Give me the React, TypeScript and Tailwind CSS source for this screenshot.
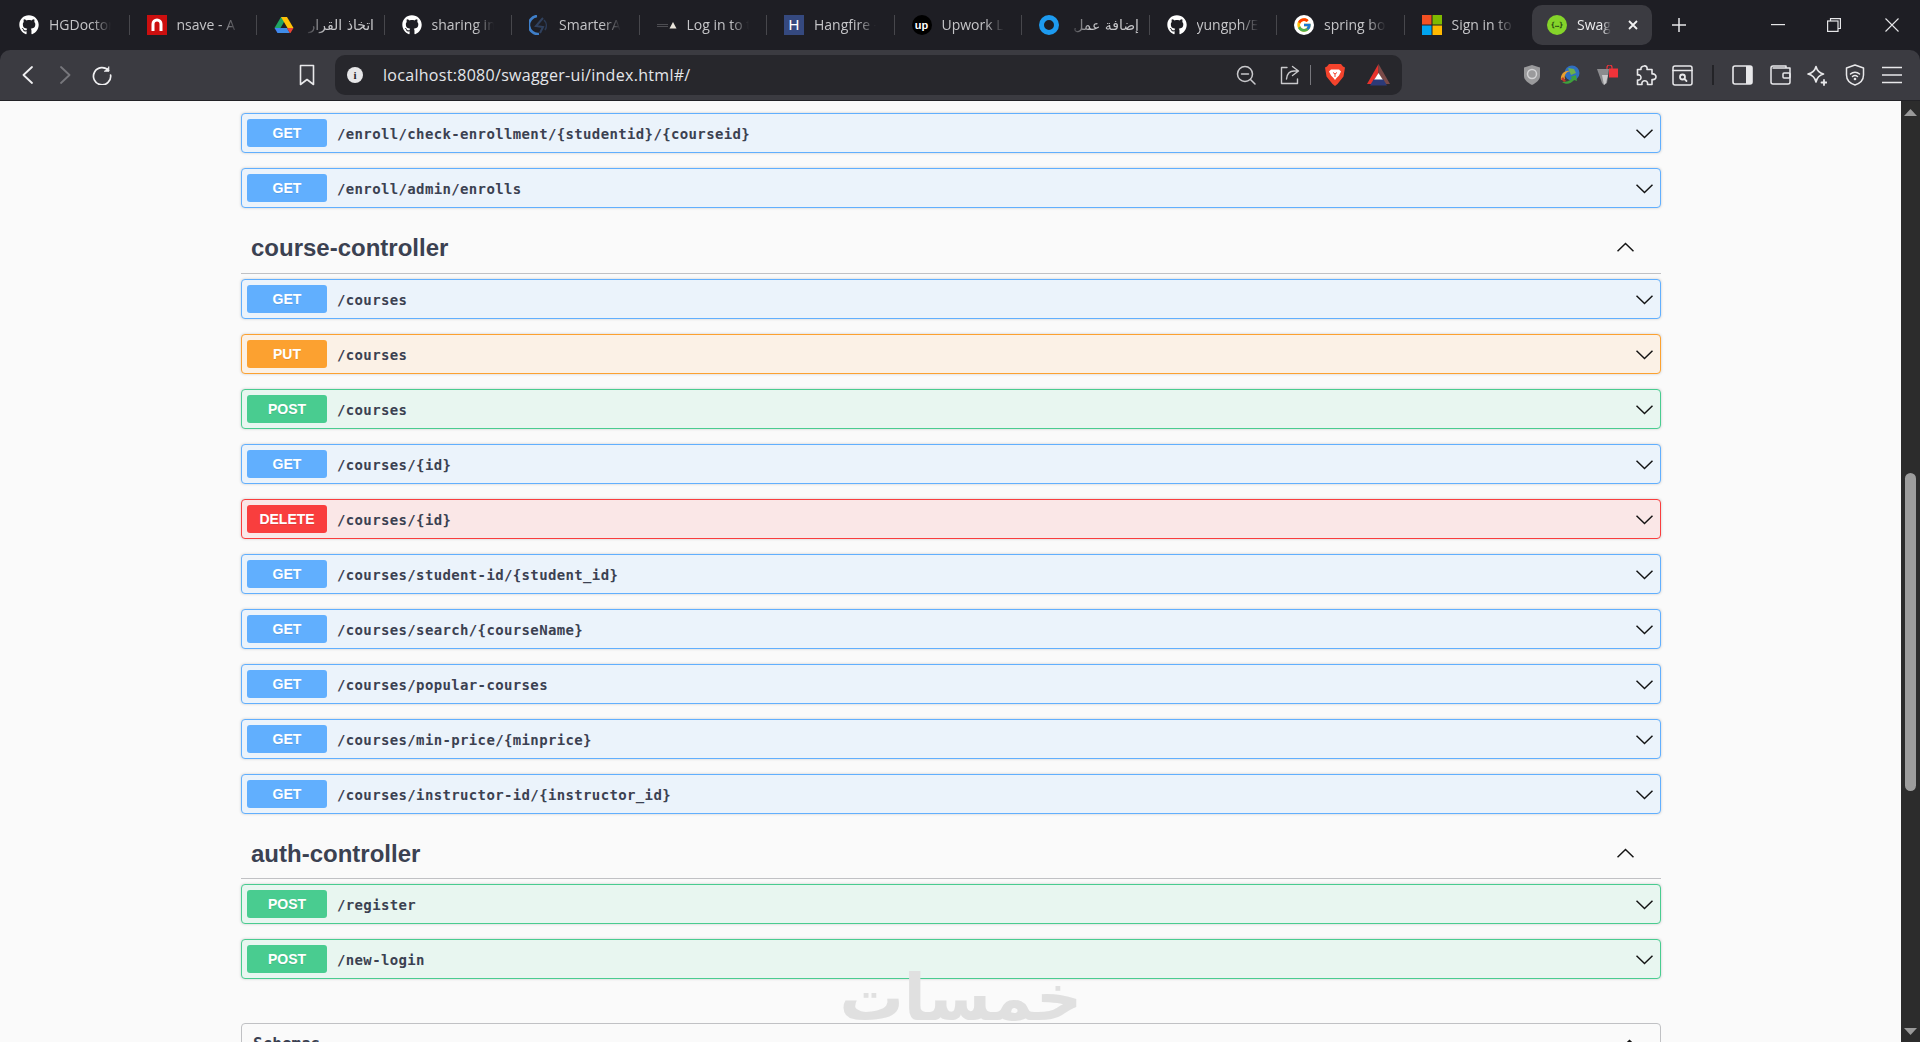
import React from 'react';
import { FaGithub } from 'react-icons/fa';
import { FcGoogle } from 'react-icons/fc';

type Method = 'GET' | 'PUT' | 'POST' | 'DELETE';

const methodStyles: Record<Method, { row: string; badge: string }> = {
  GET: { row: 'border-[#61affe] bg-[#ebf3fb]', badge: 'bg-[#61affe]' },
  PUT: { row: 'border-[#fca130] bg-[#fbf1e6]', badge: 'bg-[#fca130]' },
  POST: { row: 'border-[#49cc90] bg-[#e8f6f0]', badge: 'bg-[#49cc90]' },
  DELETE: { row: 'border-[#f93e3e] bg-[#fae7e7]', badge: 'bg-[#f93e3e]' },
};

const Chevron: React.FC<{ up?: boolean; className?: string }> = ({ up, className }) => (
  <svg viewBox="0 0 17 10" className={className} fill="none" stroke="#141414" strokeWidth="1.5">
    <path d={up ? 'M0.5 9.2 8.5 1.5 16.5 9.2' : 'M0.5 0.8 8.5 8.5 16.5 0.8'} />
  </svg>
);

const Operation: React.FC<{ method: Method; path: string }> = ({ method, path }) => (
  <div className={`flex h-[40px] items-center rounded-[4px] border mb-[15px] pl-[5px] pr-[7px] shadow-[0_0_3px_rgba(0,0,0,0.19)] ${methodStyles[method].row}`}>
    <span className={`flex h-[28px] w-[80px] items-center justify-center rounded-[3px] text-[14px] font-bold text-white font-['Liberation_Sans',Arial,sans-serif] [text-shadow:0_1px_0_rgba(0,0,0,0.1)] ${methodStyles[method].badge}`}>
      {method}
    </span>
    <span className="ml-[10px] pt-[2px] text-[14px] font-bold tracking-[0.36px] text-[#3b4151] font-['DejaVu_Sans_Mono',monospace]">
      {path}
    </span>
    <Chevron className="ml-auto mt-[1px] h-[10px] w-[17px]" />
  </div>
);

const SectionHeading: React.FC<{ title: string; className?: string }> = ({ title, className }) => (
  <div className={`flex h-[51px] items-center border-b border-[#c0c1c4] mb-[5px] pl-[10px] pr-[27px] ${className ?? ''}`}>
    <h3 className="text-[24px] font-bold text-[#3b4151] font-['Liberation_Sans',Arial,sans-serif]">{title}</h3>
    <Chevron up className="ml-auto mb-[2px] h-[10px] w-[17px]" />
  </div>
);

const NsaveIcon = () => (
  <svg viewBox="0 0 20 20" className="h-[20px] w-[20px] shrink-0">
    <rect width="20" height="20" fill="#cc0f0f" />
    <path d="M6 16V9a4 4 0 0 1 8 0v7" fill="none" stroke="#fff" strokeWidth="3" />
  </svg>
);

const DriveIcon = () => (
  <svg viewBox="0 0 20 20" className="h-[20px] w-[20px] shrink-0">
    <path d="M7 2h6l-6.5 11H0.5z" fill="#1fa463" />
    <path d="M7 2h6l6.5 11h-6z" fill="#ffc107" />
    <path d="M0.5 13h6.2l-0.2 5H3.5z" fill="#4285f4" />
    <path d="M6.5 13h6.5l2.8 5H3.5z" fill="#3f8ce8" />
    <path d="M13 13h6.5l-3 5h-0.7z" fill="#ea4335" />
  </svg>
);

const SmarterIcon = () => (
  <svg viewBox="0 0 20 20" className="h-[20px] w-[20px] shrink-0" fill="none">
    <path d="M8 1a9 9 0 0 0 2 18" stroke="#3f7fc9" strokeWidth="2.6" />
    <path d="M14 3 7 11l7 1-3 6" stroke="#30415e" strokeWidth="2" />
    <path d="M15 5a8 8 0 0 1 1 10" stroke="#2b3a55" strokeWidth="1.6" />
  </svg>
);

const LoginIcon = () => (
  <svg viewBox="0 0 20 20" className="h-[20px] w-[20px] shrink-0">
    <rect x="0" y="9" width="11" height="1" fill="#4d4d52" />
    <rect x="0" y="11" width="11" height="1" fill="#4d4d52" />
    <path d="M16 7 19.500 13.500H12.500z" fill="#e9e4da" />
  </svg>
);

const HangfireIcon = () => (
  <span className="flex h-[20px] w-[20px] shrink-0 items-center justify-center bg-[#35497f] text-[15px] text-white font-['Liberation_Sans',sans-serif]">
    H
  </span>
);

const UpworkIcon = () => (
  <span className="flex h-[20px] w-[20px] shrink-0 items-center justify-center rounded-full bg-black text-[11px] font-bold leading-none text-white font-['Liberation_Sans',sans-serif]">
    up
  </span>
);

const RingIcon = () => (
  <span className="h-[20px] w-[20px] shrink-0 rounded-full border-[5px] border-[#1d9bf0]" />
);

const MicrosoftIcon = () => (
  <svg viewBox="0 0 20 20" className="h-[20px] w-[20px] shrink-0">
    <rect width="9.5" height="9.5" fill="#f25022" />
    <rect x="10.5" width="9.5" height="9.5" fill="#7fba00" />
    <rect y="10.5" width="9.5" height="9.5" fill="#00a4ef" />
    <rect x="10.5" y="10.5" width="9.5" height="9.5" fill="#ffb900" />
  </svg>
);

const SwaggerIcon = () => (
  <span className="flex h-[20px] w-[20px] shrink-0 items-center justify-center rounded-full bg-[#85d42a] text-[7px] font-bold leading-none text-[#1c3a10] font-['DejaVu_Sans_Mono',monospace]">
    {'{…}'}
  </span>
);

const GithubIcon = () => <FaGithub className="h-[20px] w-[20px] shrink-0 text-white" />;
const GoogleIcon = () => (
  <span className="flex h-[20px] w-[20px] shrink-0 items-center justify-center rounded-full bg-white">
    <FcGoogle className="h-[16px] w-[16px]" />
  </span>
);

const Tab: React.FC<{ icon: React.ReactNode; label: string; rtl?: boolean; last?: boolean }> = ({ icon, label, rtl, last }) => (
  <div className={`flex h-[20px] w-[127.5px] shrink-0 items-center pl-[17px] ${last ? '' : 'border-r border-[#47474c]'}`}>
    {icon}
    {rtl ? (
      <span dir="rtl" className="ml-[10px] w-[70px] overflow-hidden whitespace-nowrap text-[14px] text-[#c5c5c8] font-['DejaVu_Sans',sans-serif] [mask-image:linear-gradient(to_left,black_70%,transparent)]">
        {label}
      </span>
    ) : (
      <span className="-mt-[2px] ml-[10px] w-[62px] overflow-hidden whitespace-nowrap text-[14px] text-[#c5c5c8] font-['Open_Sans',sans-serif] [mask-image:linear-gradient(to_right,black_70%,transparent)]">
        {label}
      </span>
    )}
  </div>
);

const TabStrip = () => (
  <div className="flex h-[50px] items-center bg-[#1e1e24] pl-[2px]">
    <Tab icon={<GithubIcon />} label="HGDoctor" />
    <Tab icon={<NsaveIcon />} label="nsave - A" />
    <Tab icon={<DriveIcon />} label="اتخاذ القرار" rtl />
    <Tab icon={<GithubIcon />} label="sharing images" />
    <Tab icon={<SmarterIcon />} label="SmarterASP" />
    <Tab icon={<LoginIcon />} label="Log in to the" />
    <Tab icon={<HangfireIcon />} label="Hangfire - Dash" />
    <Tab icon={<UpworkIcon />} label="Upwork Login" />
    <Tab icon={<RingIcon />} label="إضافة عمل" rtl />
    <Tab icon={<GithubIcon />} label="yungph/Ed" />
    <Tab icon={<GoogleIcon />} label="spring boot" />
    <Tab icon={<MicrosoftIcon />} label="Sign in to" last />
    {/* active tab */}
    <div className="flex h-[40px] w-[120px] shrink-0 items-center rounded-[10px] bg-[#3b3b41] pl-[15px]">
      <SwaggerIcon />
      <span className="-mt-[2px] ml-[10px] w-[34px] overflow-hidden whitespace-nowrap text-[14px] text-[#ececee] font-['Open_Sans',sans-serif] [mask-image:linear-gradient(to_right,black_75%,transparent)]">
        Swagger
      </span>
      <svg viewBox="0 0 10 10" className="ml-[17px] h-[10px] w-[10px]" stroke="#f2f2f2" strokeWidth="1.8">
        <path d="M1 1l8 8M9 1l-8 8" />
      </svg>
    </div>
    <svg viewBox="0 0 14 14" className="ml-[20px] h-[14px] w-[14px]" stroke="#e6e6e8" strokeWidth="1.5">
      <path d="M7 0v14M0 7h14" />
    </svg>
    {/* window controls */}
    <svg viewBox="0 0 14 2" className="ml-[85px] h-[2px] w-[14px]" fill="#e6e6e8">
      <rect width="14" height="1.2" />
    </svg>
    <svg viewBox="0 0 14 14" className="ml-[42px] h-[14px] w-[14px]" fill="none" stroke="#e6e6e8" strokeWidth="1.2">
      <rect x="0.6" y="3" width="10.4" height="10.4" />
      <path d="M3.5 3V0.6h9.9v9.9H11" />
    </svg>
    <svg viewBox="0 0 14 14" className="ml-[44px] h-[14px] w-[14px]" stroke="#e6e6e8" strokeWidth="1.1">
      <path d="M0.5 0.5l13 13M13.5 0.5l-13 13" />
    </svg>
  </div>
);

const ToolStroke: React.FC<{ box?: string; className: string; children: React.ReactNode; stroke?: string; width?: number }> = ({ box = '0 0 20 20', className, children, stroke = '#dcdcde', width = 1.6 }) => (
  <svg viewBox={box} className={`shrink-0 ${className}`} fill="none" stroke={stroke} strokeWidth={width} strokeLinecap="round" strokeLinejoin="round">
    {children}
  </svg>
);

const Toolbar = () => (
  <div className="h-[51px] border-b border-[#222226] bg-[#1e1e24]">
    <div className="flex h-[50px] items-center rounded-t-[10px] bg-[#3b3b41]">
      <ToolStroke box="0 0 11 18" className="ml-[22px] h-[18px] w-[11px]" stroke="#f0f0f2" width={1.8}>
        <path d="M10 1 1.5 9l8.5 8" />
      </ToolStroke>
      <ToolStroke box="0 0 11 18" className="ml-[27px] h-[18px] w-[11px]" stroke="#77777c" width={1.8}>
        <path d="M1 1l8.5 8L1 17" />
      </ToolStroke>
      <ToolStroke className="ml-[21px] h-[20px] w-[20px]" stroke="#f0f0f2" width={1.7}>
        <path d="M16.5 5.5A8.6 8.6 0 1 0 18.6 10" />
        <path d="M16.8 1.8v4.4h-4.4" fill="#f0f0f2" strokeWidth="1" />
      </ToolStroke>
      <ToolStroke box="0 0 16 22" className="ml-[187px] h-[22px] w-[16px]" stroke="#e8e8ea" width={1.6}>
        <path d="M1.5 1.5h13v19L8 15.5l-6.5 5z" />
      </ToolStroke>

      {/* address bar */}
      <div className="ml-[20px] flex h-[40px] w-[1067px] shrink-0 items-center rounded-[10px] bg-[#27272c]">
        <span className="ml-[12px] flex h-[16px] w-[16px] shrink-0 items-center justify-center rounded-full bg-[#e6e6e8] text-[11px] font-bold leading-none text-[#27272c] font-['Liberation_Serif',serif]">
          i
        </span>
        <span className="ml-[20px] text-[16px] text-[#e4e6ea] font-['Open_Sans',sans-serif] tracking-[0.3px]">
          localhost:8080/swagger-ui/index.html#/
        </span>
        <ToolStroke className="ml-auto h-[20px] w-[20px]" stroke="#c9c9cc" width={1.5}>
          <circle cx="9" cy="9" r="7.5" />
          <path d="M5.5 9h7M14.5 14.5l4.5 4.5" />
        </ToolStroke>
        <ToolStroke className="ml-[24px] h-[20px] w-[20px]" stroke="#c9c9cc" width={1.4}>
          <path d="M7 2.5H1.5v16h16v-4.5M12.5 1.5 18.5 6l-6 4.5M18 6h-4c-5 0-7 3-7.5 8" />
        </ToolStroke>
        <span className="ml-[10px] h-[20px] w-px bg-[#77777c]" />
        <svg viewBox="0 0 20 22" className="ml-[14px] h-[22px] w-[20px] shrink-0">
          <path d="M4 0h12l2 2.500 2 1-1.500 9L12.500 20 10 22l-2.500-2L1.500 12.500 0 3.500l2-1z" fill="#f4432c" />
          <path d="M6 5.500h8l2 2-2 4-2.500 2.500-1.500 2-1.500-2L6 11.500l-2-4z" fill="#fff" />
          <path d="M8 8.500 10 10l2-1.500M10 10v3" fill="none" stroke="#f4432c" strokeWidth="1" />
        </svg>
        <svg viewBox="0 0 23 22" className="ml-[22px] mr-[12px] h-[22px] w-[23px] shrink-0">
          <path d="M11.500 0 0 20h5l6.500-11z" fill="#e8322c" />
          <path d="M11.500 0 23 20h-5l-6.500-11z" fill="#7a4a48" />
          <path d="M11.500 9 16 16H7z" fill="#fff" />
          <path d="M6.500 15.500h10L20 21.500H3z" fill="#2c3a78" />
        </svg>
      </div>

      {/* extensions */}
      <svg viewBox="0 0 16 20" className="ml-[122px] h-[20px] w-[16px] shrink-0">
        <path d="M8 0l8 2.500V11c0 4-4 7-8 9-4-2-8-5-8-9V2.500z" fill="#9a9a9c" />
        <circle cx="8" cy="9" r="4.500" fill="none" stroke="#d2d2d4" strokeWidth="1.500" />
      </svg>
      <svg viewBox="0 0 20 20" className="ml-[20px] h-[20px] w-[20px] shrink-0">
        <circle cx="12" cy="8" r="7.500" fill="#2f6fc0" />
        <path d="M8 3l6 1 2 4-5 2z" fill="#6fb04a" />
        <path d="M1 15C0 9 5 5 10 6c-4 1-6 4-5 8z" fill="#e8a030" />
        <path d="M2 17c4 3 9 2 12-2l3 1-1-6-6 2 2 1c-2 3-6 4-10 4z" fill="#3fa03c" />
        <path d="M1 14l3 3 2-1-3-4z" fill="#c0392b" />
      </svg>
      <svg viewBox="0 0 21 20" className="ml-[17px] h-[20px] w-[21px] shrink-0">
        <path d="M0 4h12l-2 14-3 2-2-2z" fill="#8b8b8e" />
        <path d="M5 10h6l-2 8-2 2z" fill="#c8c8ca" />
        <rect x="12" y="3.500" width="9" height="9" fill="#f0333a" />
        <path d="M10 4V2.500a2.500 2.500 0 0 1 5 0V4" fill="none" stroke="#f0333a" strokeWidth="1.200" />
      </svg>
      <ToolStroke box="0 0 21 21" className="ml-[18px] h-[21px] w-[21px]" stroke="#e8e8ea" width={1.6}>
        <path d="M8 1c2-0.500 3.500 1 3 3.500h5v4.500c2.500-0.500 4 1 4 2.800s-1.500 3.200-4 2.700v5h-4.500c0.500-2.500-1-3.700-2.800-3.700S5.500 17 6 19.500H1.500V15C4 15.500 5 14 5 12.500S4 9.500 1.500 10V4.500H5C4.500 2.500 6 1.300 8 1z" />
      </ToolStroke>
      <ToolStroke box="0 0 21 21" className="ml-[15px] h-[21px] w-[21px]" stroke="#e8e8ea" width={1.5}>
        <rect x="1" y="1" width="19" height="19" rx="2" />
        <path d="M1 5.500h19" />
        <circle cx="10.500" cy="12" r="2.500" strokeWidth="1.800" />
        <path d="M12.500 14l2 2" strokeWidth="1.800" />
      </ToolStroke>
      <span className="ml-[19px] h-[20px] w-[2px] shrink-0 bg-[#232327]" />
      <svg viewBox="0 0 21 20" className="ml-[18px] h-[20px] w-[21px] shrink-0">
        <rect x="1" y="1" width="19" height="18" rx="2" fill="none" stroke="#e8e8ea" strokeWidth="1.600" />
        <rect x="14" y="1" width="6" height="18" fill="#e8e8ea" />
      </svg>
      <ToolStroke box="0 0 21 20" className="ml-[17px] h-[20px] w-[21px]" stroke="#e8e8ea" width={1.5}>
        <path d="M16 3V1H3a2 2 0 0 0-2 2v14a2 2 0 0 0 2 2h15a2 2 0 0 0 2-2V3H3" />
        <rect x="13" y="8" width="7" height="5" rx="1" />
      </ToolStroke>
      <ToolStroke box="0 0 21 21" className="ml-[15px] h-[21px] w-[21px]" stroke="#e8e8ea" width={1.6}>
        <path d="M10 1.500c1 4 3.500 6.500 7.500 7.500-4 1-6.500 3.500-7.500 8-1-4.500-3.500-7-8-8 4.500-1 7-3.500 8-7.500z" />
        <path d="M18 15v5M15.500 17.500h5" strokeWidth="1.800" />
      </ToolStroke>
      <ToolStroke box="0 0 20 22" className="ml-[18px] h-[22px] w-[20px]" stroke="#e8e8ea" width={1.5}>
        <path d="M10 1l8.500 3v7c0 5-4 8.500-8.500 10C5.500 19.500 1.500 16 1.500 11V4z" />
        <path d="M5.500 10c2.500-2.500 6.500-2.500 9 0M7.500 12.500c1.500-1.300 3.500-1.300 5 0" />
        <circle cx="10" cy="15" r="0.600" />
      </ToolStroke>
      <ToolStroke box="0 0 20 18" className="ml-[17px] h-[18px] w-[20px]" stroke="#e8e8ea" width={1.6}>
        <path d="M0.500 1.500h19M0.500 9h19M0.500 16.500h19" />
      </ToolStroke>
    </div>
  </div>
);

const Scrollbar = () => (
  <div className="flex w-[19px] shrink-0 flex-col items-center bg-[#2c2c2c]">
    <svg viewBox="0 0 13 7" className="mt-[8px] h-[7px] w-[13px]" fill="#9a9a9a"><path d="M6.500 0 13 7H0z" /></svg>
    <div className="mt-[357px] h-[318px] w-[11px] rounded-full bg-[#9d9d9d]" />
    <svg viewBox="0 0 13 7" className="mb-[7px] mt-auto h-[7px] w-[13px]" fill="#9a9a9a"><path d="M0 0h13L6.500 7z" /></svg>
  </div>
);

const enrollOps: [Method, string][] = [
  ['GET', '/enroll/check-enrollment/{studentid}/{courseid}'],
  ['GET', '/enroll/admin/enrolls'],
];

const courseOps: [Method, string][] = [
  ['GET', '/courses'],
  ['PUT', '/courses'],
  ['POST', '/courses'],
  ['GET', '/courses/{id}'],
  ['DELETE', '/courses/{id}'],
  ['GET', '/courses/student-id/{student_id}'],
  ['GET', '/courses/search/{courseName}'],
  ['GET', '/courses/popular-courses'],
  ['GET', '/courses/min-price/{minprice}'],
  ['GET', '/courses/instructor-id/{instructor_id}'],
];

const authOps: [Method, string][] = [
  ['POST', '/register'],
  ['POST', '/new-login'],
];

export default function App() {
  return (
    <div className="relative flex h-[1042px] w-[1920px] flex-col overflow-hidden bg-[#fafafa]">
      <TabStrip />
      <Toolbar />

      <div className="flex min-h-0 flex-1">
        <main className="min-w-0 flex-1 overflow-hidden pl-[241px] pr-[240px] pt-[12px]">
          {enrollOps.map(([m, p]) => <Operation key={p} method={m} path={p} />)}
          <SectionHeading title="course-controller" />
          {courseOps.map(([m, p]) => <Operation key={m + p} method={m} path={p} />)}
          <SectionHeading title="auth-controller" className="-mt-[1px] pt-[1px]" />
          {authOps.map(([m, p]) => <Operation key={p} method={m} path={p} />)}

          <div className="mt-[44px] flex h-[80px] items-start rounded-[4px] border border-[#c0c1c4] pl-[11px] pr-[22px] pt-[8px]">
            <span className="text-[16px] font-bold text-[#3b4151] font-['DejaVu_Sans_Mono',monospace]">Schemas</span>
            <Chevron up className="ml-auto mt-[7px] h-[10px] w-[17px]" />
          </div>
        </main>
        <Scrollbar />
      </div>

      {/* khamsat watermark */}
      <span dir="rtl" className="pointer-events-none absolute left-[852px] top-[962px] w-[230px] text-center text-[64px] font-bold leading-[72px] text-[#e0e0e0] font-['DejaVu_Sans',sans-serif]">
        خمسات
      </span>
    </div>
  );
}
